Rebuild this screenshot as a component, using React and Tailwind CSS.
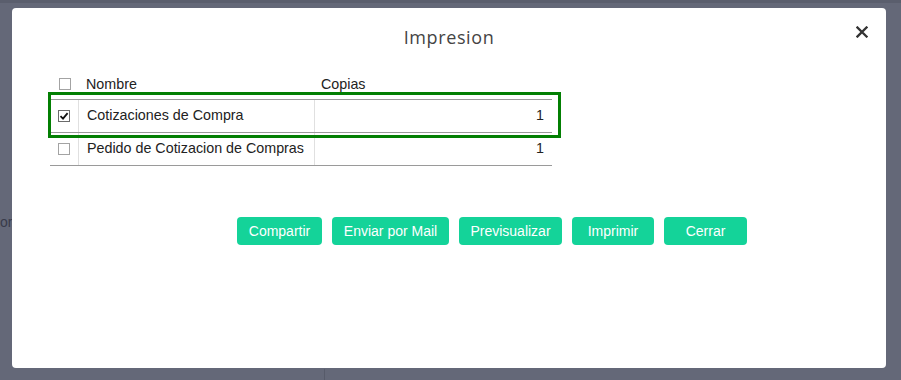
import React from "react";

function Box({ checked }) {
  return (
    <div
      className={
        "w-[12px] h-[12px] bg-white border flex items-center justify-center " +
        (checked ? "border-[#6b6b6b]" : "border-[#a3a3a3]")
      }
    >
      {checked && (
        <svg width="10" height="10" viewBox="0 0 10 10">
          <path d="M1.5 5.2 L4 7.6 L8.6 2.2" fill="none" stroke="#111" strokeWidth="1.8" />
        </svg>
      )}
    </div>
  );
}

const rows = [
  { name: "Cotizaciones de Compra", copies: 1, checked: true },
  { name: "Pedido de Cotizacion de Compras", copies: 1, checked: false },
];

const buttons = [
  { label: "Compartir", w: "w-[85px]" },
  { label: "Enviar por Mail", w: "w-[117px]" },
  { label: "Previsualizar", w: "w-[103px]" },
  { label: "Imprimir", w: "w-[82px]" },
  { label: "Cerrar", w: "w-[83px]" },
];

export default function App() {
  return (
    <div className="relative w-[901px] h-[380px] overflow-hidden bg-[#646878] font-['Liberation_Sans',Arial,sans-serif]">
      <div className="h-[3px] bg-[#5a5e6d]" />
      <span className="absolute left-0 top-[213px] text-[14px] leading-[18px] text-[#383b4a]">or</span>
      <div className="absolute left-[324px] top-[369px] w-px h-[11px] bg-[#575b6a]" />

      <div className="absolute left-[12px] top-[8px] w-[874px] h-[360px] bg-white rounded-[4px]">
        <div className="pt-[18px] text-center text-[18px] leading-[22px] text-[#444] tracking-[0.6px] font-['Open_Sans',sans-serif]">
          Impresion
        </div>
        <button className="absolute right-[18px] top-[18px] w-[12px] h-[12px] flex items-center justify-center">
          <svg width="12" height="12" viewBox="0 0 12 12">
            <path d="M1.5 1.5 L10.5 10.5 M10.5 1.5 L1.5 10.5" stroke="#333" strokeWidth="2.3" strokeLinecap="square" />
          </svg>
        </button>

        <div className="mt-[24px] pl-[38px]">
          <div className="w-[502px] text-[14.3px] text-[#222]">
            <div className="flex h-[27px] pb-[4px] items-center">
              <div className="w-[29px] flex justify-center">
                <Box checked={false} />
              </div>
              <div className="w-[236px] pl-[7px] leading-[16px]">Nombre</div>
              <div className="w-[237px] pl-[6px] leading-[16px]">Copias</div>
            </div>
            {rows.map((r, i) => (
              <div
                key={i}
                className={
                  "flex h-[33px] border-t border-[#9a9a9a] " + (i === rows.length - 1 ? "border-b h-[34px]" : "")
                }
              >
                <div className="w-[29px] flex items-center justify-center border-r border-[#e0e0e0]">
                  <Box checked={r.checked} />
                </div>
                <div className="w-[236px] pl-[8px] flex items-center border-r border-[#e0e0e0]">{r.name}</div>
                <div className="w-[237px] pr-[8px] flex items-center justify-end">{r.copies}</div>
              </div>
            ))}
          </div>
        </div>

        <div className="absolute left-[36px] top-[84px] w-[513px] h-[46px] border-[3px] border-[#037f03]" />

        <div className="mt-[51px] pl-[225px] flex gap-[10px]">
          {buttons.map((b) => (
            <button
              key={b.label}
              className={
                b.w +
                " h-[28px] rounded-[4px] bg-[#14d399] text-white text-[14px] leading-[28px] text-center font-['Liberation_Sans',Arial,sans-serif]"
              }
            >
              {b.label}
            </button>
          ))}
        </div>
      </div>
    </div>
  );
}
